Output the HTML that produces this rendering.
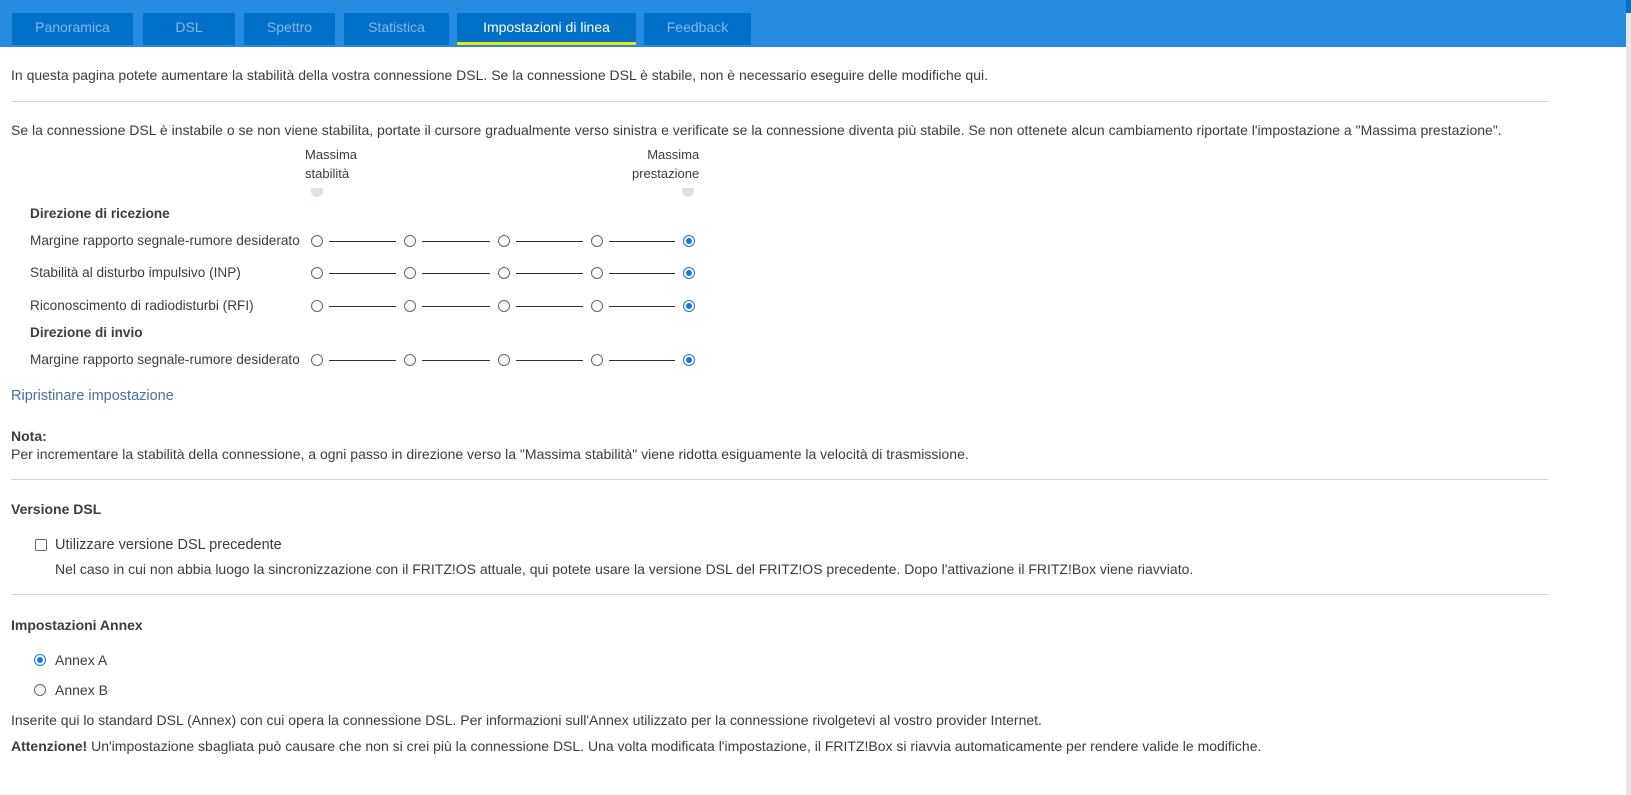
<!DOCTYPE html>
<html><head><meta charset="utf-8"><style>
*{margin:0;padding:0;box-sizing:border-box}
body{width:1631px;height:795px;overflow:hidden;background:#fff;font-family:"Liberation Sans",sans-serif;font-size:14px;color:#3c3c3c;position:relative}
.hdr{position:absolute;left:0;top:0;width:1626px;height:47px;background:#268ce0}
.sb{position:absolute;left:1626px;top:0;width:5px;height:795px;background:#e8e6e1}
.sbt{position:absolute;left:1626px;top:0;width:5px;height:13px;background:#0070c9}
.tab{position:absolute;top:13px;height:32px;background:#0070c9;color:#8ab6e6;font-size:14px;text-align:center;line-height:28px}
.tab.act{color:#fff;border-bottom:3px solid #f0e600}
.t{position:absolute;white-space:nowrap;line-height:16px}
.b{font-weight:bold}
.hr{position:absolute;left:11px;width:1537px;height:1px;background:#d4d4d4}
.r{position:absolute;width:12px;height:12px;border:1px solid #666;border-radius:50%;background:#fff}
.r.on{border-color:#1a73e8}
.r.on::after{content:"";position:absolute;left:2px;top:2px;width:6px;height:6px;border-radius:50%;background:#1a73e8}
.ln{position:absolute;height:1px;background:#333}
.ar{position:absolute;width:12px;height:9px;background:#dde2e2;border-radius:0 0 6px 6px}
.sl{font-size:13.6px}
</style></head><body>
<div class="hdr"></div><div class="sb"></div><div class="sbt"></div>
<div class="tab" style="left:12px;width:121px">Panoramica</div>
<div class="tab" style="left:143px;width:92px">DSL</div>
<div class="tab" style="left:244px;width:91px">Spettro</div>
<div class="tab" style="left:344px;width:105px">Statistica</div>
<div class="tab act" style="left:457px;width:179px">Impostazioni di linea</div>
<div class="tab" style="left:644px;width:107px">Feedback</div>

<div class="t" style="left:11px;top:67px">In questa pagina potete aumentare la stabilità della vostra connessione DSL. Se la connessione DSL è stabile, non è necessario eseguire delle modifiche qui.</div>
<div class="hr" style="top:101px"></div>
<div class="t" style="left:11px;top:122px">Se la connessione DSL è instabile o se non viene stabilita, portate il cursore gradualmente verso sinistra e verificate se la connessione diventa più stabile. Se non ottenete alcun cambiamento riportate l'impostazione a "Massima prestazione".</div>
<div class="t" style="left:305px;top:145px;line-height:19px;font-size:13px">Massima<br>stabilità</div>
<div class="t" style="left:632px;top:145px;line-height:19px;font-size:13px;text-align:right">Massima<br>prestazione</div>
<div class="ar" style="left:311px;top:188px"></div>
<div class="ar" style="left:682px;top:188px"></div>
<div class="t b sl" style="left:30px;top:206px">Direzione di ricezione</div>
<div class="t sl" style="left:30px;top:233px">Margine rapporto segnale-rumore desiderato</div>
<div class="t sl" style="left:30px;top:265px">Stabilità al disturbo impulsivo (INP)</div>
<div class="t sl" style="left:30px;top:298px">Riconoscimento di radiodisturbi (RFI)</div>
<div class="t b sl" style="left:30px;top:325px">Direzione di invio</div>
<div class="t sl" style="left:30px;top:352px">Margine rapporto segnale-rumore desiderato</div>
<div id="rows"></div>
<script>
var ys=[241,273,306,360],xs=[317,410,504,597,689],h='';
ys.forEach(function(y){xs.forEach(function(x,i){h+='<div class="r'+(i==4?' on':'')+'" style="left:'+(x-6)+'px;top:'+(y-6)+'px"></div>';if(i<4)h+='<div class="ln" style="left:'+(x+12)+'px;top:'+y+'px;width:'+(xs[i+1]-x-26)+'px"></div>';});});
document.getElementById('rows').innerHTML=h;
</script>
<div class="t" style="left:11px;top:388px;color:#4a6fa5;font-size:14.5px">Ripristinare impostazione</div>
<div class="t b" style="left:11px;top:428px">Nota:</div>
<div class="t" style="left:11px;top:446px">Per incrementare la stabilità della connessione, a ogni passo in direzione verso la "Massima stabilità" viene ridotta esiguamente la velocità di trasmissione.</div>
<div class="hr" style="top:479px"></div>
<div class="t b" style="left:11px;top:501px">Versione DSL</div>
<div style="position:absolute;left:35px;top:539px;width:12px;height:12px;border:1px solid #666;border-radius:2px"></div>
<div class="t" style="left:55px;top:537px;font-size:14.5px">Utilizzare versione DSL precedente</div>
<div class="t" style="left:55px;top:561px">Nel caso in cui non abbia luogo la sincronizzazione con il FRITZ!OS attuale, qui potete usare la versione DSL del FRITZ!OS precedente. Dopo l'attivazione il FRITZ!Box viene riavviato.</div>
<div class="hr" style="top:594px"></div>
<div class="t b" style="left:11px;top:617px">Impostazioni Annex</div>
<div class="r on" style="left:34px;top:654px"></div>
<div class="t" style="left:55px;top:652px">Annex A</div>
<div class="r" style="left:34px;top:684px"></div>
<div class="t" style="left:55px;top:682px">Annex B</div>
<div class="t" style="left:11px;top:712px">Inserite qui lo standard DSL (Annex) con cui opera la connessione DSL. Per informazioni sull'Annex utilizzato per la connessione rivolgetevi al vostro provider Internet.</div>
<div class="t" style="left:11px;top:738px"><b>Attenzione!</b> Un'impostazione sbagliata può causare che non si crei più la connessione DSL. Una volta modificata l'impostazione, il FRITZ!Box si riavvia automaticamente per rendere valide le modifiche.</div>
</body></html>
